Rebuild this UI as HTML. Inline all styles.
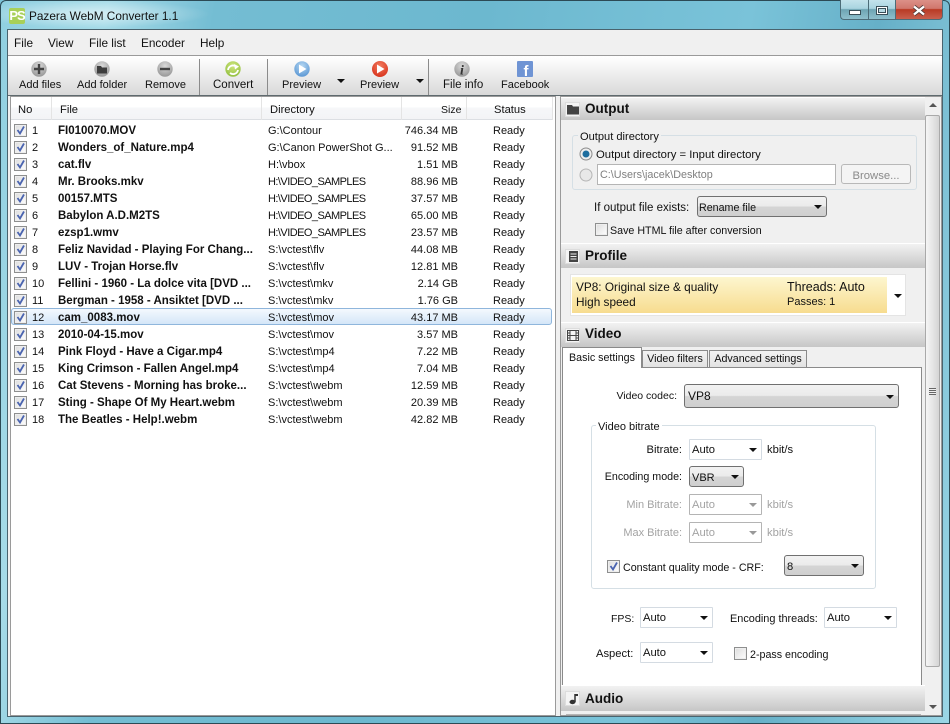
<!DOCTYPE html>
<html><head><meta charset="utf-8">
<style>
html,body{margin:0;padding:0;width:950px;height:724px;overflow:hidden;background:#7cc3d8}
*{box-sizing:border-box}
body{position:relative;font-family:"Liberation Sans",sans-serif;font-size:12px;color:#111}
.a{position:absolute}
.t{position:absolute;white-space:nowrap;line-height:14px;font-size:11.2px;margin-top:1px}
.r{text-align:right}
.g{color:#a3a3a3}
.b{font-weight:bold}
.hd{position:absolute;left:561px;width:364px;background:linear-gradient(#f2f2f2,#c6c6c6);border-top:1px solid #fff}
.hd b{position:absolute;left:24px;top:3px;font-size:13.5px;line-height:16px;color:#111}
.hi{position:absolute;left:4px;top:4px;width:15px;height:15px;background:#f4f4f4;border:1px solid #ddd}
.cb{position:absolute;width:13px;height:13px;border:1px solid #8e8f8f;background:linear-gradient(135deg,#dcdcdc,#fff);box-shadow:inset 0 0 0 1px #eee}
.cb svg{position:absolute;left:0;top:0}
.sel{position:absolute;border:1px solid #707070;border-radius:3px;background:linear-gradient(#f2f2f2 0,#ebebeb 48%,#d5d5d5 52%,#cfcfcf 100%)}
.cmb{position:absolute;border:1px solid #d4dbe2;background:#fff;border-radius:1px}
.cmb.dis{border-color:#b4b4b4}
.ar{position:absolute;width:0;height:0;border-left:4px solid transparent;border-right:4px solid transparent;border-top:4px solid #111}
.ar.gr{border-top-color:#999}
.gb{position:absolute;border:1px solid #d5dfe5;border-radius:3px}
.lab{position:absolute;background:#fff;padding:0 2px;line-height:14px;font-size:11px;white-space:nowrap;margin-top:1px}
.tab{position:absolute;top:350px;height:17px;background:linear-gradient(#f3f3f3,#e2e2e2);border:1px solid #8a8a8a;border-bottom:none;font-size:10.7px;line-height:16px;text-align:center;white-space:nowrap}
.rw{position:absolute;left:11px;width:541px;height:17px}
.rw .cb{left:3px;top:3px}
.rw span{position:absolute;top:3px;line-height:14px;white-space:nowrap;font-size:11px}
.n{left:21px}
.rw .f{left:47px;font-weight:bold;font-size:11.5px}
.rw .d{left:257px;font-size:11px}
.rw .v{letter-spacing:-.55px}
.s{right:94px}
.st{left:482px}
.hc{position:absolute;top:99px;height:23px;line-height:23px;font-size:11.2px;white-space:nowrap}
.dv{position:absolute;top:97px;height:23px;width:1px;background:#e4e4e4}
</style></head><body>
<!-- frame -->
<div class="a" style="left:0;top:0;width:950px;height:724px;background:linear-gradient(100deg,#8fcfe0 0,#a6dbe8 10%,#74bdd3 20%,#6cb8cf 45%,#7ac3d9 70%,#66b0c8 82%,#9ad6e6 100%);border:1px solid #2c4a55;border-radius:6px 6px 0 0"></div>
<div class="a" style="left:1px;top:0;width:210px;height:28px;background:radial-gradient(ellipse at 90px 14px,rgba(255,255,255,.55),rgba(255,255,255,0) 70%)"></div>
<div class="a" style="left:7px;top:29px;width:936px;height:688px;background:#f0f0f0;border:1px solid #49636e"></div>
<!-- title icon -->
<div class="a" style="left:9px;top:8px;width:16px;height:16px;background:#a8d05a;border-radius:2px;color:#fff;font:bold 13px/16px 'Liberation Sans',sans-serif;text-align:center;letter-spacing:-1px">PS</div>
<div class="t" style="left:29px;top:8px;font-size:11.8px;color:#111">Pazera WebM Converter 1.1</div>
<!-- window buttons -->
<div class="a" style="left:840px;top:0;width:29px;height:20px;background:linear-gradient(#c3e3ec 0,#a9d4e0 45%,#6ea4b3 50%,#8ec0cd 100%);border:1px solid #4c6c78;border-top:none;border-right:none;border-radius:0 0 0 4px"></div>
<div class="a" style="left:849px;top:10px;width:12px;height:5px;background:#fff;border:1px solid #3a4f58"></div>
<div class="a" style="left:868px;top:0;width:28px;height:20px;background:linear-gradient(#c3e3ec 0,#a9d4e0 45%,#6ea4b3 50%,#8ec0cd 100%);border-left:1px solid #4c6c78;border-bottom:1px solid #4c6c78"></div>
<div class="a" style="left:876px;top:6px;width:12px;height:9px;background:#fff;border:1px solid #3a4f58"></div>
<div class="a" style="left:878px;top:8px;width:8px;height:5px;background:#b9dbe4;border:1px solid #3a4f58"></div>
<div class="a" style="left:895px;top:0;width:48px;height:20px;background:linear-gradient(#dc9088 0,#d0776c 45%,#b83a24 50%,#c9604e 100%);border:1px solid #4c6c78;border-top:none;border-radius:0 0 4px 0"></div>
<svg class="a" style="left:912px;top:5px" width="14" height="11"><path d="M2 1.500L12 9.500M12 1.500L2 9.500" stroke="#4d3a38" stroke-width="4"/><path d="M2 1.500L12 9.500M12 1.500L2 9.500" stroke="#fff" stroke-width="2.400"/></svg>
<!-- menu -->
<div class="t" style="left:14px;top:35px;font-size:11.8px">File</div>
<div class="t" style="left:48px;top:35px;font-size:11.8px">View</div>
<div class="t" style="left:89px;top:35px;font-size:11.8px">File list</div>
<div class="t" style="left:141px;top:35px;font-size:11.8px">Encoder</div>
<div class="t" style="left:200px;top:35px;font-size:11.8px">Help</div>
<div class="a" style="left:8px;top:55px;width:934px;height:1px;background:#9a9a9a"></div>
<!-- toolbar -->
<div class="a" style="left:8px;top:56px;width:934px;height:39px;background:linear-gradient(#fff 0,#f6f6f6 25%,#d9d9d9 100%)"></div>
<div class="a" style="left:8px;top:95px;width:934px;height:1px;background:#5f6a6e"></div>
<div class="a" style="left:199px;top:59px;width:1px;height:36px;background:#8b8b8b"></div>
<div class="a" style="left:267px;top:59px;width:1px;height:36px;background:#8b8b8b"></div>
<div class="a" style="left:428px;top:59px;width:1px;height:36px;background:#8b8b8b"></div>
<svg class="a" style="left:0;top:56px" width="560" height="22">
<defs>
<radialGradient id="gy" cx=".5" cy=".3" r=".8"><stop offset="0" stop-color="#dadada"/><stop offset="1" stop-color="#8e8e8e"/></radialGradient>
<radialGradient id="gn" cx=".5" cy=".3" r=".8"><stop offset="0" stop-color="#cfe67e"/><stop offset="1" stop-color="#8cbb3a"/></radialGradient>
<radialGradient id="bl" cx=".5" cy=".3" r=".8"><stop offset="0" stop-color="#b5d7f2"/><stop offset="1" stop-color="#4f8fd0"/></radialGradient>
<radialGradient id="rd" cx=".5" cy=".3" r=".8"><stop offset="0" stop-color="#f27a5e"/><stop offset="1" stop-color="#d42a14"/></radialGradient>
</defs>
<circle cx="39" cy="13" r="7.700" fill="url(#gy)"/><path d="M39 8v10M34 13h10" stroke="#444" stroke-width="2.400"/>
<circle cx="102" cy="13" r="7.700" fill="url(#gy)"/><path d="M97 10h4l1 1.500h5v6h-10z" fill="#3d3d3d"/>
<circle cx="165" cy="13" r="7.700" fill="url(#gy)"/><path d="M160 13h10" stroke="#444" stroke-width="2.400"/>
<circle cx="233" cy="13" r="7.700" fill="url(#gn)"/><path d="M228 14a5 5 0 0 1 8-3.500M238 14a5 5 0 0 1-8 3" stroke="#fff" stroke-width="1.800" fill="none"/><path d="M234 8l5 2.500-4 3z" fill="#fff"/>
<circle cx="302" cy="13" r="7.700" fill="url(#bl)"/><path d="M299 8.500l7.500 4.500-7.500 4.500z" fill="#fff"/>
<circle cx="380" cy="13" r="8" fill="url(#rd)"/><path d="M377 8.500l7.500 4.500-7.500 4.500z" fill="#fff"/>
<circle cx="462" cy="13" r="7.700" fill="url(#gy)"/><text x="462" y="18.500" font-family="Liberation Serif" font-style="italic" font-weight="bold" font-size="14" text-anchor="middle" fill="#333">i</text>
<rect x="517" y="5" width="16" height="16" rx="1" fill="#6f94d4"/><text x="526" y="20" font-family="Liberation Sans" font-weight="bold" font-size="15" text-anchor="middle" fill="#fff">f</text>
</svg>
<div class="t" style="left:19px;top:77px;font-size:11px">Add files</div>
<div class="t" style="left:77px;top:77px;font-size:11px">Add folder</div>
<div class="t" style="left:145px;top:77px;font-size:11px">Remove</div>
<div class="t" style="left:213px;top:77px;font-size:11.500px">Convert</div>
<div class="t" style="left:282px;top:77px;font-size:11px">Preview</div>
<div class="t" style="left:360px;top:77px;font-size:11px">Preview</div>
<div class="t" style="left:443px;top:77px;font-size:11.500px">File info</div>
<div class="t" style="left:501px;top:77px;font-size:11px">Facebook</div>
<div class="ar" style="left:337px;top:79px"></div>
<div class="ar" style="left:416px;top:79px"></div>
<!-- list -->
<div class="a" style="left:10px;top:96px;width:546px;height:620px;background:#fff;border:1px solid #9a9a9a"></div>
<div class="a" style="left:11px;top:97px;width:541px;height:23px;background:linear-gradient(#fff 0,#fff 45%,#f6f7f9 50%,#f3f4f6 100%);border-bottom:1px solid #dcdfe3"></div>
<div class="dv" style="left:51px"></div><div class="dv" style="left:261px"></div><div class="dv" style="left:401px"></div><div class="dv" style="left:466px"></div><div class="dv" style="left:552px"></div>
<div class="hc" style="left:18px">No</div><div class="hc" style="left:60px">File</div><div class="hc" style="left:270px">Directory</div><div class="hc" style="left:441px;font-size:10.500px">Size</div><div class="hc" style="left:494px">Status</div>
<div class="a" style="left:11px;top:308px;width:541px;height:17px;background:linear-gradient(#f4f9fe,#d4e6f8);border:1px solid #8fb6dc;border-radius:3px"></div>
<div class="rw" style="top:121px"><div class="cb"><svg width="11" height="11"><path d="M2.500 5l2.500 3.500 4-7" stroke="#4a64b0" stroke-width="1.800" fill="none"/></svg></div><span class="n">1</span><span class="f">FI010070.MOV</span><span class="d">G:\Contour</span><span class="s">746.34 MB</span><span class="st">Ready</span></div>
<div class="rw" style="top:138px"><div class="cb"><svg width="11" height="11"><path d="M2.500 5l2.500 3.500 4-7" stroke="#4a64b0" stroke-width="1.800" fill="none"/></svg></div><span class="n">2</span><span class="f">Wonders_of_Nature.mp4</span><span class="d">G:\Canon PowerShot G...</span><span class="s">91.52 MB</span><span class="st">Ready</span></div>
<div class="rw" style="top:155px"><div class="cb"><svg width="11" height="11"><path d="M2.500 5l2.500 3.500 4-7" stroke="#4a64b0" stroke-width="1.800" fill="none"/></svg></div><span class="n">3</span><span class="f">cat.flv</span><span class="d">H:\vbox</span><span class="s">1.51 MB</span><span class="st">Ready</span></div>
<div class="rw" style="top:172px"><div class="cb"><svg width="11" height="11"><path d="M2.500 5l2.500 3.500 4-7" stroke="#4a64b0" stroke-width="1.800" fill="none"/></svg></div><span class="n">4</span><span class="f">Mr. Brooks.mkv</span><span class="d v">H:\VIDEO_SAMPLES</span><span class="s">88.96 MB</span><span class="st">Ready</span></div>
<div class="rw" style="top:189px"><div class="cb"><svg width="11" height="11"><path d="M2.500 5l2.500 3.500 4-7" stroke="#4a64b0" stroke-width="1.800" fill="none"/></svg></div><span class="n">5</span><span class="f">00157.MTS</span><span class="d v">H:\VIDEO_SAMPLES</span><span class="s">37.57 MB</span><span class="st">Ready</span></div>
<div class="rw" style="top:206px"><div class="cb"><svg width="11" height="11"><path d="M2.500 5l2.500 3.500 4-7" stroke="#4a64b0" stroke-width="1.800" fill="none"/></svg></div><span class="n">6</span><span class="f">Babylon A.D.M2TS</span><span class="d v">H:\VIDEO_SAMPLES</span><span class="s">65.00 MB</span><span class="st">Ready</span></div>
<div class="rw" style="top:223px"><div class="cb"><svg width="11" height="11"><path d="M2.500 5l2.500 3.500 4-7" stroke="#4a64b0" stroke-width="1.800" fill="none"/></svg></div><span class="n">7</span><span class="f">ezsp1.wmv</span><span class="d v">H:\VIDEO_SAMPLES</span><span class="s">23.57 MB</span><span class="st">Ready</span></div>
<div class="rw" style="top:240px"><div class="cb"><svg width="11" height="11"><path d="M2.500 5l2.500 3.500 4-7" stroke="#4a64b0" stroke-width="1.800" fill="none"/></svg></div><span class="n">8</span><span class="f">Feliz Navidad - Playing For Chang...</span><span class="d">S:\vctest\flv</span><span class="s">44.08 MB</span><span class="st">Ready</span></div>
<div class="rw" style="top:257px"><div class="cb"><svg width="11" height="11"><path d="M2.500 5l2.500 3.500 4-7" stroke="#4a64b0" stroke-width="1.800" fill="none"/></svg></div><span class="n">9</span><span class="f">LUV - Trojan Horse.flv</span><span class="d">S:\vctest\flv</span><span class="s">12.81 MB</span><span class="st">Ready</span></div>
<div class="rw" style="top:274px"><div class="cb"><svg width="11" height="11"><path d="M2.500 5l2.500 3.500 4-7" stroke="#4a64b0" stroke-width="1.800" fill="none"/></svg></div><span class="n">10</span><span class="f">Fellini - 1960 - La dolce vita [DVD ...</span><span class="d">S:\vctest\mkv</span><span class="s">2.14 GB</span><span class="st">Ready</span></div>
<div class="rw" style="top:291px"><div class="cb"><svg width="11" height="11"><path d="M2.500 5l2.500 3.500 4-7" stroke="#4a64b0" stroke-width="1.800" fill="none"/></svg></div><span class="n">11</span><span class="f">Bergman - 1958 - Ansiktet [DVD ...</span><span class="d">S:\vctest\mkv</span><span class="s">1.76 GB</span><span class="st">Ready</span></div>
<div class="rw" style="top:308px"><div class="cb"><svg width="11" height="11"><path d="M2.500 5l2.500 3.500 4-7" stroke="#4a64b0" stroke-width="1.800" fill="none"/></svg></div><span class="n">12</span><span class="f">cam_0083.mov</span><span class="d">S:\vctest\mov</span><span class="s">43.17 MB</span><span class="st">Ready</span></div>
<div class="rw" style="top:325px"><div class="cb"><svg width="11" height="11"><path d="M2.500 5l2.500 3.500 4-7" stroke="#4a64b0" stroke-width="1.800" fill="none"/></svg></div><span class="n">13</span><span class="f">2010-04-15.mov</span><span class="d">S:\vctest\mov</span><span class="s">3.57 MB</span><span class="st">Ready</span></div>
<div class="rw" style="top:342px"><div class="cb"><svg width="11" height="11"><path d="M2.500 5l2.500 3.500 4-7" stroke="#4a64b0" stroke-width="1.800" fill="none"/></svg></div><span class="n">14</span><span class="f">Pink Floyd - Have a Cigar.mp4</span><span class="d">S:\vctest\mp4</span><span class="s">7.22 MB</span><span class="st">Ready</span></div>
<div class="rw" style="top:359px"><div class="cb"><svg width="11" height="11"><path d="M2.500 5l2.500 3.500 4-7" stroke="#4a64b0" stroke-width="1.800" fill="none"/></svg></div><span class="n">15</span><span class="f">King Crimson - Fallen Angel.mp4</span><span class="d">S:\vctest\mp4</span><span class="s">7.04 MB</span><span class="st">Ready</span></div>
<div class="rw" style="top:376px"><div class="cb"><svg width="11" height="11"><path d="M2.500 5l2.500 3.500 4-7" stroke="#4a64b0" stroke-width="1.800" fill="none"/></svg></div><span class="n">16</span><span class="f">Cat Stevens - Morning has broke...</span><span class="d">S:\vctest\webm</span><span class="s">12.59 MB</span><span class="st">Ready</span></div>
<div class="rw" style="top:393px"><div class="cb"><svg width="11" height="11"><path d="M2.500 5l2.500 3.500 4-7" stroke="#4a64b0" stroke-width="1.800" fill="none"/></svg></div><span class="n">17</span><span class="f">Sting - Shape Of My Heart.webm</span><span class="d">S:\vctest\webm</span><span class="s">20.39 MB</span><span class="st">Ready</span></div>
<div class="rw" style="top:410px"><div class="cb"><svg width="11" height="11"><path d="M2.500 5l2.500 3.500 4-7" stroke="#4a64b0" stroke-width="1.800" fill="none"/></svg></div><span class="n">18</span><span class="f">The Beatles - Help!.webm</span><span class="d">S:\vctest\webm</span><span class="s">42.82 MB</span><span class="st">Ready</span></div>
<!-- right panel -->
<div class="a" style="left:560px;top:96px;width:382px;height:620px;background:#f0f0f0;border:1px solid #9a9a9a"></div>
<!-- scrollbar -->
<div class="a" style="left:925px;top:97px;width:16px;height:618px;background:#f0f0f0"></div>
<div class="a" style="left:925px;top:115px;width:15px;height:552px;border:1px solid #a9a9a9;border-radius:2px;background:linear-gradient(90deg,#f5f5f5,#e6e6e6 50%,#d4d4d4)"></div>
<div class="a" style="left:929px;top:388px;width:7px;height:7px;background:repeating-linear-gradient(#666 0 1px,#eee 1px 2px)"></div>
<div class="a" style="left:929px;top:103px;width:0;height:0;border-left:4px solid transparent;border-right:4px solid transparent;border-bottom:4px solid #555"></div>
<div class="a" style="left:929px;top:705px;width:0;height:0;border-left:4px solid transparent;border-right:4px solid transparent;border-top:4px solid #555"></div>
<!-- Output -->
<div class="hd" style="top:97px;height:23px"><div class="hi"></div><svg class="a" style="left:6px;top:6px" width="12" height="11"><path d="M0 1h5l1 1.500h6v8H0z" fill="#444"/></svg><b>Output</b></div>
<div class="gb" style="left:572px;top:135px;width:345px;height:55px"></div>
<div class="t" style="left:578px;top:129px;background:#f0f0f0;padding:0 2px 0 2px;font-size:11.100px">Output directory</div>
<svg class="a" style="left:579px;top:147px" width="14" height="14"><circle cx="7" cy="7" r="6" fill="#eee" stroke="#8a8a8a"/><circle cx="7" cy="7" r="3.500" fill="#1d6d9e"/></svg>
<div class="t" style="left:596px;top:147px;font-size:11.300px">Output directory = Input directory</div>
<svg class="a" style="left:579px;top:168px" width="14" height="14"><circle cx="7" cy="7" r="6" fill="#e8e8e8" stroke="#b5b5b5"/></svg>
<div class="a" style="left:597px;top:164px;width:239px;height:21px;background:#fff;border:1px solid #b5b5b5"></div>
<div class="t" style="left:600px;top:167px;color:#7f7f7f;font-size:10.800px">C:\Users\jacek\Desktop</div>
<div class="a" style="left:841px;top:164px;width:70px;height:20px;background:#f4f4f4;border:1px solid #b8b8b8;border-radius:3px;text-align:center;line-height:22px;font-size:11.300px;color:#8a8a8a">Browse...</div>
<div class="t" style="left:594px;top:200px;font-size:11.500px">If output file exists:</div>
<div class="sel" style="left:697px;top:196px;width:130px;height:21px"></div>
<div class="t" style="left:699px;top:200px;font-size:10.700px">Rename file</div><div class="ar" style="left:814px;top:205px"></div>
<div class="cb" style="left:595px;top:223px"></div>
<div class="t" style="left:610px;top:223px;font-size:10.700px">Save HTML file after conversion</div>
<!-- Profile -->
<div class="hd" style="top:243px;height:25px"><div class="hi" style="top:5px"></div><svg class="a" style="left:8px;top:7px" width="9" height="11"><rect width="9" height="11" fill="#444"/><path d="M1.500 3h6M1.500 5.500h6M1.500 8h6" stroke="#eee"/></svg><b style="top:4px">Profile</b></div>
<div class="a" style="left:570px;top:274px;width:336px;height:42px;background:#fff;border:1px solid #e4e4e4"></div>
<div class="a" style="left:572px;top:277px;width:315px;height:36px;background:linear-gradient(#fdf6cf,#f7dc8f)"></div>
<div class="t" style="left:576px;top:279px;font-size:11.800px">VP8: Original size &amp; quality</div>
<div class="t" style="left:576px;top:294px;font-size:11.800px">High speed</div>
<div class="t" style="left:787px;top:279px;font-size:12.500px">Threads: Auto</div>
<div class="t" style="left:787px;top:294px;font-size:11px">Passes: 1</div>
<div class="ar" style="left:894px;top:294px"></div>
<!-- Video -->
<div class="hd" style="top:322px;height:25px"><div class="hi" style="top:5px"></div><svg class="a" style="left:6px;top:7px" width="12" height="11"><rect x=".5" y=".5" width="11" height="10" fill="none" stroke="#444"/><path d="M3 0v11M9 0v11M3 5.500h6" stroke="#444"/><path d="M0 3h3M0 5.500h3M0 8h3M9 3h3M9 5.500h3M9 8h3" stroke="#444"/></svg><b>Video</b></div>
<div class="a" style="left:562px;top:367px;width:360px;height:319px;background:#fff;border:1px solid #8a8a8a"></div>
<div class="tab" style="left:562px;top:347px;width:80px;height:21px;background:#fff;border-color:#8a8a8a;line-height:20px;z-index:2">Basic settings</div>
<div class="tab" style="left:642px;width:66px">Video filters</div>
<div class="tab" style="left:709px;width:98px">Advanced settings</div>
<div class="t r" style="left:600px;width:77px;top:388px;font-size:10.500px">Video codec:</div>
<div class="sel" style="left:684px;top:384px;width:215px;height:24px"></div>
<div class="t" style="left:688px;top:388px;font-size:12px">VP8</div><div class="ar" style="left:886px;top:395px"></div>
<div class="gb" style="left:591px;top:425px;width:285px;height:164px"></div>
<div class="lab" style="left:596px;top:419px">Video bitrate</div>
<div class="t r" style="left:600px;width:82px;top:442px">Bitrate:</div>
<div class="cmb" style="left:689px;top:439px;width:73px;height:21px"></div>
<div class="t" style="left:692px;top:442px">Auto</div><div class="ar" style="left:749px;top:448px"></div>
<div class="t" style="left:767px;top:442px">kbit/s</div>
<div class="t r" style="left:600px;width:82px;top:469px;font-size:10.700px">Encoding mode:</div>
<div class="sel" style="left:689px;top:466px;width:55px;height:21px"></div>
<div class="t" style="left:692px;top:470px;font-size:11px">VBR</div><div class="ar" style="left:731px;top:475px"></div>
<div class="t r g" style="left:600px;width:82px;top:497px;font-size:11px">Min Bitrate:</div>
<div class="cmb dis" style="left:689px;top:494px;width:73px;height:21px"></div>
<div class="t g" style="left:692px;top:497px">Auto</div><div class="ar gr" style="left:749px;top:503px"></div>
<div class="t g" style="left:767px;top:497px">kbit/s</div>
<div class="t r g" style="left:600px;width:82px;top:525px;font-size:11px">Max Bitrate:</div>
<div class="cmb dis" style="left:689px;top:522px;width:73px;height:21px"></div>
<div class="t g" style="left:692px;top:525px">Auto</div><div class="ar gr" style="left:749px;top:531px"></div>
<div class="t g" style="left:767px;top:525px">kbit/s</div>
<div class="cb" style="left:607px;top:560px"><svg width="11" height="11"><path d="M2.500 5l2.500 3.500 4-7" stroke="#4a64b0" stroke-width="1.800" fill="none"/></svg></div>
<div class="t" style="left:623px;top:560px;font-size:10.700px">Constant quality mode - CRF:</div>
<div class="sel" style="left:784px;top:555px;width:80px;height:21px"></div>
<div class="t" style="left:787px;top:559px">8</div><div class="ar" style="left:851px;top:564px"></div>
<div class="t" style="left:611px;top:611px;font-size:10.500px">FPS:</div>
<div class="cmb" style="left:640px;top:607px;width:73px;height:21px"></div>
<div class="t" style="left:643px;top:610px">Auto</div><div class="ar" style="left:700px;top:616px"></div>
<div class="t" style="left:730px;top:611px;font-size:10.900px">Encoding threads:</div>
<div class="cmb" style="left:824px;top:607px;width:73px;height:21px"></div>
<div class="t" style="left:827px;top:610px">Auto</div><div class="ar" style="left:884px;top:616px"></div>
<div class="t" style="left:596px;top:646px">Aspect:</div>
<div class="cmb" style="left:640px;top:642px;width:73px;height:21px"></div>
<div class="t" style="left:643px;top:645px">Auto</div><div class="ar" style="left:700px;top:651px"></div>
<div class="cb" style="left:734px;top:647px"></div>
<div class="t" style="left:750px;top:647px;font-size:10.700px">2-pass encoding</div>
<!-- Audio -->
<div class="hd" style="top:685px;height:26px"><div class="hi" style="top:5px"></div><svg class="a" style="left:7px;top:7px" width="11" height="12"><path d="M7 1v8" stroke="#333" stroke-width="1.500"/><ellipse cx="4.500" cy="9" rx="3" ry="2.200" fill="#333"/><path d="M7 1h3v2H7z" fill="#333"/></svg><b style="top:5px">Audio</b></div>
<div class="a" style="left:566px;top:714px;width:355px;height:1px;background:#b5b5b5"></div>
</body></html>
